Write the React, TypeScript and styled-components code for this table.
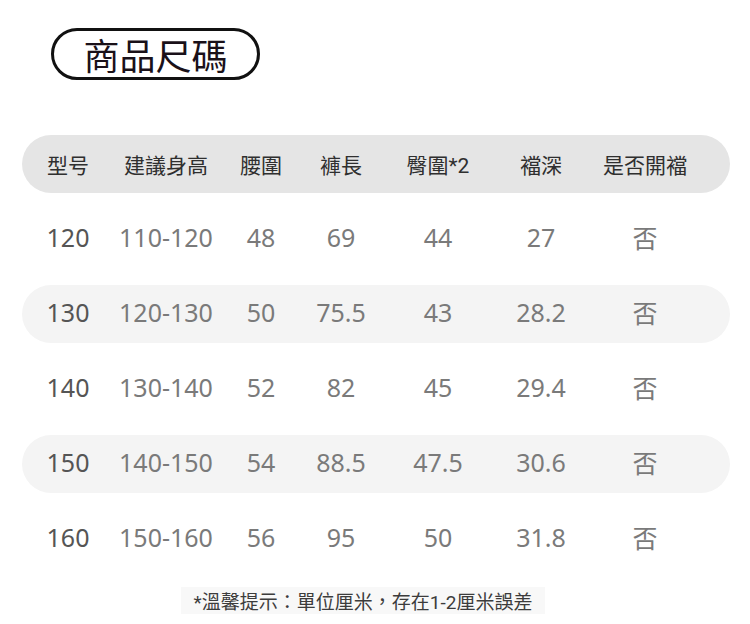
import React from 'react';
import styled, { createGlobalStyle } from 'styled-components';

const GlobalStyle = createGlobalStyle`
    body {
        margin: 0;
        background: #ffffff;
        font-family: 'Noto Sans', 'Noto Sans CJK TC', sans-serif;
    }
`;

const headers = ['型号', '建議身高', '腰圍', '褲長', '臀圍*2', '襠深', '是否開襠'];

const rows = [
    ['120', '110-120', '48', '69', '44', '27', '否'],
    ['130', '120-130', '50', '75.5', '43', '28.2', '否'],
    ['140', '130-140', '52', '82', '45', '29.4', '否'],
    ['150', '140-150', '54', '88.5', '47.5', '30.6', '否'],
    ['160', '150-160', '56', '95', '50', '31.8', '否'],
];

export default function App() {
    return (
        <>
            <GlobalStyle />
            <Page>
                <Title>商品尺碼</Title>
                <Table>
                    <Row tone="header">
                        {headers.map((h) => (
                            <HeadCell key={h}>{h}</HeadCell>
                        ))}
                    </Row>
                    {rows.map((r, i) => (
                        <Row key={r[0]} tone={i % 2 === 1 ? 'shaded' : 'plain'}>
                            {r.map((v, j) => (
                                <Cell key={j} strong={j === 0}>
                                    {v}
                                </Cell>
                            ))}
                        </Row>
                    ))}
                </Table>
                <Footer>
                    <Note>*溫馨提示：單位厘米，存在1-2厘米誤差</Note>
                </Footer>
            </Page>
        </>
    );
}

const Page = styled.div`
    width: 750px;
    height: 624px;
    padding-top: 28px;
    box-sizing: border-box;
    overflow: hidden;
`;

const Title = styled.div`
    margin-left: 51px;
    width: 209px;
    height: 52px;
    box-sizing: border-box;
    border: 3px solid #111;
    border-radius: 26px;
    display: flex;
    align-items: center;
    justify-content: center;
    font-family: 'Noto Sans CJK TC', sans-serif;
    font-size: 36px;
    color: #1a1119;
`;

const Table = styled.div`
    margin: 55px 0 0 22px;
    width: 708px;
    display: flex;
    flex-direction: column;
    gap: 17px;
`;

const Row = styled.div<{ tone: 'header' | 'shaded' | 'plain' }>`
    height: 58px;
    border-radius: 29px;
    display: grid;
    grid-template-columns: 92px 104px 86px 74px 120px 86px 122px;
    align-items: center;
    background: ${({ tone }) => (tone === 'header' ? '#e5e5e5' : tone === 'shaded' ? '#f4f4f4' : 'transparent')};
`;

const HeadCell = styled.div`
    text-align: center;
    white-space: nowrap;
    font-family: 'Roboto', 'Noto Sans CJK TC', sans-serif;
    font-size: 21px;
    color: #2f2f2f;
`;

const Cell = styled.div<{ strong?: boolean }>`
    text-align: center;
    white-space: nowrap;
    padding-bottom: 5px;
    font-family: 'Noto Sans', 'Noto Sans CJK TC', sans-serif;
    font-size: 25px;
    font-weight: 400;
    color: ${({ strong }) => (strong ? '#555555' : '#7a7a7a')};
`;

const Footer = styled.div`
    width: 726px;
    margin-top: 19px;
    display: flex;
    justify-content: center;
`;

const Note = styled.div`
    height: 27px;
    padding: 0 13px;
    background: #f8f8f8;
    display: flex;
    align-items: center;
    font-family: 'Roboto', 'Noto Sans CJK TC', sans-serif;
    font-size: 19px;
    color: #3c3c3c;
`;
